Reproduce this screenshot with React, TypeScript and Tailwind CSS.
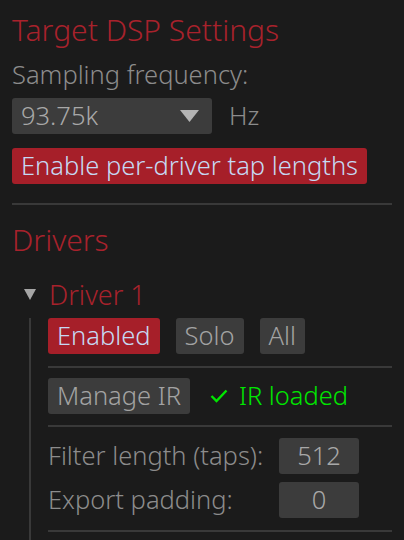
import React from 'react';

const font = { fontFamily: '"Noto Sans", "Open Sans", sans-serif' };

function Btn({ children, active }: { children: React.ReactNode; active?: boolean }) {
  return (
    <div
      className={
        active
          ? 'h-9 px-[9px] flex items-center rounded-[3px] bg-[#a61f29] text-[#c6d9f3]'
          : 'h-9 px-[9px] flex items-center rounded-[3px] bg-[#3c3c3c] text-[#a3a3a3]'
      }
    >
      {children}
    </div>
  );
}

function Sep() {
  return <div className="h-[2px] bg-[#393939]" />;
}

export default function App() {
  return (
    <div className="w-[404px] h-[540px] overflow-hidden bg-[#1b1b1b] text-[25.5px] font-light text-[#8c8c8c] leading-none" style={font}>
      <div className="pl-3 pr-3 pt-3">
        <div className="h-9 flex items-center text-[30px] text-[#a8222c]">Target DSP Settings</div>
        <div className="h-[50px] flex items-center pt-[4px]">Sampling frequency:</div>
        <div className="flex items-center gap-[17px]">
          <div className="w-[200px] h-9 flex items-center justify-between pl-[9px] pr-[13px] rounded-[3px] bg-[#3c3c3c] text-[#a8a8a8]">
            <span>93.75k</span>
            <svg width="19" height="12" viewBox="0 0 19 12">
              <polygon points="0,0 19,0 9.5,12" fill="#b4b4b4" />
            </svg>
          </div>
          <span>Hz</span>
        </div>
        <div className="mt-[14px] flex">
          <Btn active>Enable per-driver tap lengths</Btn>
        </div>
        <div className="mt-[19px]">
          <Sep />
        </div>
        <div className="h-[70px] flex items-center text-[30px] text-[#a8222c]">Drivers</div>
        <div className="flex items-center h-[38px]">
          <svg width="12" height="11" viewBox="0 0 12 11" className="ml-[12px]">
            <polygon points="0,0 12,0 6,11" fill="#a6a6a6" />
          </svg>
          <span className="ml-[13px] text-[27px] text-[#a8222c]">Driver 1</span>
        </div>
        <div className="flex ml-[17px] mt-[5px]">
          <div className="w-[2px] bg-[#393939]" />
          <div className="flex-1 pl-[17px] pb-6">
            <div className="flex gap-4">
              <Btn active>Enabled</Btn>
              <Btn>Solo</Btn>
              <Btn>All</Btn>
            </div>
            <div className="mt-3"><Sep /></div>
            <div className="mt-[10px] flex items-center">
              <Btn>Manage IR</Btn>
              <svg width="18" height="14" viewBox="0 0 18 14" className="ml-5" fill="none">
                <polyline points="1.5,7 6.5,12 16.5,1.5" stroke="#00e600" strokeWidth="2.4" />
              </svg>
              <span className="ml-[11px] text-[#00e600]">IR loaded</span>
            </div>
            <div className="mt-[11px]"><Sep /></div>
            <div className="mt-[11px] flex items-center">
              <span className="w-[231px]">Filter length (taps):</span>
              <div className="w-[80px] h-9 flex items-center justify-center rounded-[3px] bg-[#3c3c3c] text-[#a8a8a8]">512</div>
            </div>
            <div className="mt-2 flex items-center">
              <span className="w-[231px]">Export padding:</span>
              <div className="w-[80px] h-9 flex items-center justify-center rounded-[3px] bg-[#3c3c3c] text-[#a8a8a8]">0</div>
            </div>
            <div className="mt-3"><Sep /></div>
          </div>
        </div>
      </div>
    </div>
  );
}
